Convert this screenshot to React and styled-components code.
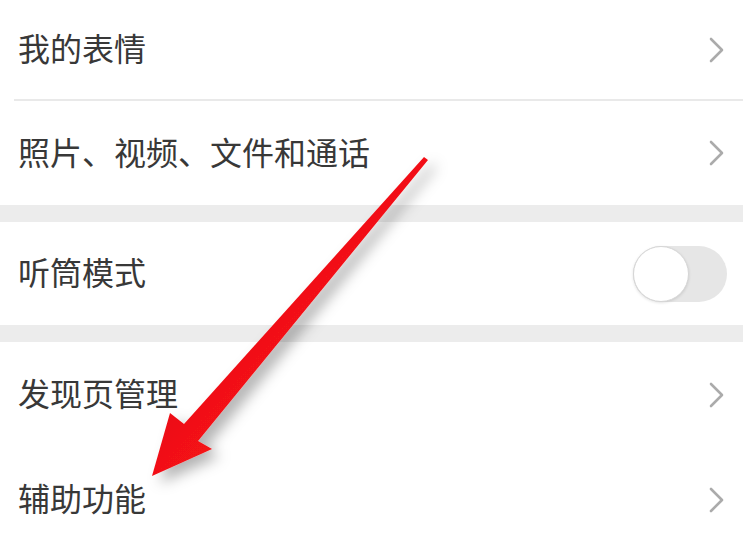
import React from 'react';
import styled, { createGlobalStyle } from 'styled-components';

const GlobalStyle = createGlobalStyle`
  html, body {
    margin: 0;
    padding: 0;
    background: #ffffff;
  }
  body {
    font-family: "Noto Sans CJK SC", "Noto Sans", sans-serif;
    overflow: hidden;
  }
`;

const Screen = styled.div`
  position: relative;
  width: 743px;
  height: 541px;
  overflow: hidden;
  background: #ffffff;
`;

const List = styled.div`
  display: flex;
  flex-direction: column;
`;

const Row = styled.div`
  display: flex;
  align-items: center;
  justify-content: space-between;
  height: ${(p) => p.height}px;
  padding: 0 16px 0 18px;
  box-sizing: border-box;
  flex-shrink: 0;
`;

const Label = styled.span`
  font-size: 32px;
  line-height: 1;
  color: #383838;
  margin-bottom: 5px;
`;

const Divider = styled.div`
  height: 2px;
  margin-left: 14px;
  background: #e9e9e9;
  flex-shrink: 0;
`;

const Band = styled.div`
  height: 17px;
  background: #ececec;
  flex-shrink: 0;
`;

const Track = styled.div`
  display: flex;
  align-items: center;
  width: 94px;
  height: 56px;
  border-radius: 28px;
  background: #e6e6e6;
`;

const Knob = styled.div`
  width: 54px;
  height: 54px;
  border-radius: 50%;
  background: #ffffff;
  border: 1px solid #d6d6d6;
  box-shadow: 0 1px 3px rgba(0, 0, 0, 0.12);
`;

const Chevron = () => (
  <svg width="22" height="28" viewBox="0 0 22 28">
    <polyline
      points="6,3 17,14 6,25"
      fill="none"
      stroke="#ababab"
      strokeWidth="2.6"
      strokeLinecap="round"
      strokeLinejoin="round"
    />
  </svg>
);

const ArrowLayer = styled.svg`
  position: absolute;
  left: 0;
  top: 0;
  pointer-events: none;
`;

const Arrow = () => (
  <ArrowLayer width="743" height="541" viewBox="0 0 743 541">
    <defs>
      <filter id="shade" x="-30%" y="-30%" width="160%" height="160%">
        <feDropShadow dx="8" dy="7" stdDeviation="7" floodColor="#000" floodOpacity="0.3" />
      </filter>
      <linearGradient id="red" x1="0" y1="0" x2="1" y2="1">
        <stop offset="0" stopColor="#c40d12" />
        <stop offset="0.5" stopColor="#f21116" />
        <stop offset="1" stopColor="#ff1a1a" />
      </linearGradient>
    </defs>
    <polygon
      filter="url(#shade)"
      fill="url(#red)"
      points="424,157 428,160 198,441 212,449 152,476 170,413 184,424"
    />
  </ArrowLayer>
);

const rows = [
  { text: '我的表情', height: 99, after: 'divider' },
  { text: '照片、视频、文件和通话', height: 104, after: 'band' },
  { text: '听筒模式', height: 103, toggle: true, after: 'band' },
  { text: '发现页管理', height: 105 },
  { text: '辅助功能', height: 105 },
];

export default function App() {
  return (
    <Screen>
      <GlobalStyle />
      <List>
        {rows.map((r) => (
          <React.Fragment key={r.text}>
            <Row height={r.height}>
              <Label>{r.text}</Label>
              {r.toggle ? (
                <Track>
                  <Knob />
                </Track>
              ) : (
                <Chevron />
              )}
            </Row>
            {r.after === 'divider' && <Divider />}
            {r.after === 'band' && <Band />}
          </React.Fragment>
        ))}
      </List>
      <Arrow />
    </Screen>
  );
}
